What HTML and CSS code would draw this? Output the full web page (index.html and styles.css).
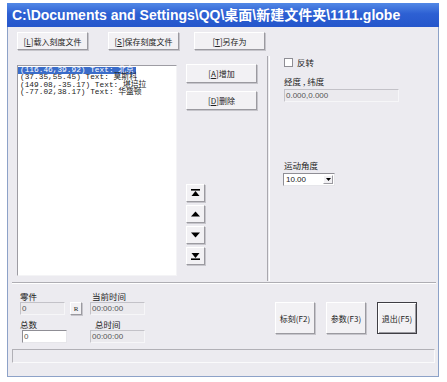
FILE: index.html
```html
<!DOCTYPE html>
<html lang="zh-CN">
<head>
  <meta charset="UTF-8" />
  <title>1111.globe</title>
  <link rel="stylesheet" href="styles.css">
</head>
<body>
  <div class="window">
    <div class="titlebar">C:\Documents and Settings\QQ\桌面\新建文件夹\1111.globe</div>
    <div class="client">

      <!-- File toolbar -->
      <div class="toolbar">
        <button class="btn tb-load">[<u>L</u>]载入刻度文件</button>
        <button class="btn tb-save">[<u>S</u>]保存刻度文件</button>
        <button class="btn tb-saveas">[<u>T</u>]另存为</button>
      </div>

      <div class="main">
        <!-- Point list -->
        <div class="list">
          <div class="item selected">(116.46,39.92) Text: 北京</div>
          <div class="item">(37.35,55.45) Text: 莫斯科</div>
          <div class="item">(149.08,-35.17) Text: 堪培拉</div>
          <div class="item">(-77.02,38.17) Text: 华盛顿</div>
        </div>

        <div class="mid">
          <button class="btn side-btn">[<u>A</u>]增加</button>
          <button class="btn side-btn del">[<u>D</u>]删除</button>
          <div class="arrows">
            <button class="btn arrow"><svg width="9" height="8" viewBox="0 0 9 8"><rect x="0" y="0" width="9" height="1.6" fill="#000"/><polygon points="4.5,2 8.5,7 0.5,7" fill="#000"/></svg></button>
            <button class="btn arrow"><svg width="9" height="6" viewBox="0 0 9 6"><polygon points="4.5,0.5 9,5.5 0,5.5" fill="#000"/></svg></button>
            <button class="btn arrow"><svg width="9" height="6" viewBox="0 0 9 6"><polygon points="0,0.5 9,0.5 4.5,5.5" fill="#000"/></svg></button>
            <button class="btn arrow"><svg width="9" height="8" viewBox="0 0 9 8"><polygon points="0.5,1 8.5,1 4.5,6" fill="#000"/><rect x="0" y="6.4" width="9" height="1.6" fill="#000"/></svg></button>
          </div>
        </div>

        <div class="vsep"></div>

        <!-- Settings panel -->
        <div class="right">
          <label class="check"><span class="box"></span>反转</label>
          <div class="label coord-label">经度 , 纬度</div>
          <div class="field coord">0.000,0.000</div>
          <div class="label angle-label">运动角度</div>
          <div class="combo">
            <span class="combo-value">10.00</span>
            <span class="combo-btn"><svg width="5" height="3" viewBox="0 0 5 3"><polygon points="0,0 5,0 2.5,3" fill="#000"/></svg></span>
          </div>
        </div>
      </div>

      <div class="hsep"></div>

      <!-- Counters and actions -->
      <div class="bottom">
        <div class="col counts">
          <div class="label">零件</div>
          <div class="field count">0</div>
          <div class="label">总数</div>
          <div class="field count white">0</div>
        </div>
        <button class="btn reset">R</button>
        <div class="col times">
          <div class="label">当前时间</div>
          <div class="field time">00:00:00</div>
          <div class="label indent">总时间</div>
          <div class="field time">00:00:00</div>
        </div>
        <div class="actions">
          <button class="btn act">标刻(F2)</button>
          <button class="btn act">参数(F3)</button>
          <button class="btn act default">退出(F5)</button>
        </div>
      </div>

      <div class="status"></div>
    </div>
  </div>
</body>
</html>
```

FILE: styles.css
```css
body {
  margin: 0;
  background: #fff;
  font-family: "Noto Sans CJK SC", "DejaVu Sans", sans-serif;
  font-size: 8px;
  color: #222;
}
.window {
  margin: 3px 0 0 7px;
  width: 430px;
  border: 1px solid #8da2c8;
  border-top: none;
  background: #ecebf0;
}
.titlebar {
  height: 24px;
  margin: 0 -1px;
  padding-left: 5px;
  background: linear-gradient(#5288e6, #2d60d3 45%, #2556cb);
  color: #fff;
  font-family: "Liberation Sans", "Noto Sans CJK SC", sans-serif;
  font-weight: bold;
  font-size: 14px;
  line-height: 25px;
  white-space: nowrap;
  overflow: hidden;
}
.client {
  height: 349px;
  display: flex;
  flex-direction: column;
}
/* 3D push button */
.btn {
  padding: 0;
  margin: 0;
  font: inherit;
  font-size: 8px;
  color: #222;
  background: #f2f1f4;
  border: 1px solid;
  border-color: #fff #9b9aa0 #9b9aa0 #fff;
  box-shadow: 1px 1px 0 #c6c5cb;
  display: flex;
  align-items: center;
  justify-content: center;
}
.toolbar {
  display: flex;
  padding: 5px 0 0 9px;
  height: 18px;
}
.toolbar .btn {
  width: 71px;
  height: 18px;
}
.tb-save { margin-left: 20px; }
.tb-saveas { margin-left: 15px; }

.main {
  display: flex;
  margin-top: 6px;
  height: 225px;
}
.list {
  margin: 9px 0 0 9px;
  width: 158px;
  height: 208px;
  background: #fff;
  border: 1px solid;
  border-color: #9d9ca3 #f4f4f6 #f4f4f6 #9d9ca3;
  font-family: "Liberation Mono", "Noto Sans CJK SC", monospace;
  font-size: 7.8px;
  padding-top: 1px;
}
.item {
  height: 7.3px;
  line-height: 7.3px;
  padding-left: 2px;
  white-space: nowrap;
}
.item.selected {
  background: #3a6cc9;
  color: #fff;
  width: fit-content;
  padding-right: 2px;
}
.mid {
  margin: 8px 0 0 9px;
  width: 71px;
  display: flex;
  flex-direction: column;
}
.side-btn {
  width: 71px;
  height: 19px;
}
.del { margin-top: 8px; }
.arrows {
  margin-top: 74px;
  display: flex;
  flex-direction: column;
  gap: 3px;
}
.arrow {
  width: 19px;
  height: 18px;
}
.vsep {
  margin-left: 10px;
  width: 1px;
  border-left: 1px solid #a9a8ae;
  border-right: 1px solid #fff;
}
.right {
  margin-left: 14px;
  display: flex;
  flex-direction: column;
  font-size: 8.5px;
}
.check {
  display: flex;
  align-items: center;
  gap: 4px;
  margin-top: 1px;
  height: 10px;
}
.box {
  width: 7px;
  height: 7px;
  background: #fff;
  border: 1px solid #8f8e95;
}
.label {
  height: 11px;
  line-height: 11px;
  white-space: nowrap;
}
.coord-label { margin-top: 9px; }
.field {
  background: #ebeaee;
  border: 1px solid;
  border-color: #c3c2c8 #f6f6f8 #f6f6f8 #c3c2c8;
  color: #555;
  height: 11px;
  line-height: 11px;
  padding-left: 1px;
  font-family: "Liberation Sans", "DejaVu Sans", sans-serif;
  font-size: 8px;
}
.coord {
  margin-top: 2px;
  width: 112px;
}
.angle-label { margin-top: 58px; }
.combo {
  margin: 2px 0 0 -1px;
  width: 50px;
  height: 11px;
  background: #fff;
  border: 1px solid;
  border-color: #8f8e95 #e6e6ea #e6e6ea #8f8e95;
  display: flex;
  align-items: center;
  font-family: "Liberation Sans", sans-serif;
  font-size: 8px;
}
.combo-value {
  flex: 1;
  padding-left: 2px;
}
.combo-btn {
  width: 10px;
  height: 9px;
  margin-right: 1px;
  background: #f2f1f4;
  border: 1px solid;
  border-color: #fff #9b9aa0 #9b9aa0 #fff;
  box-sizing: border-box;
  display: flex;
  align-items: center;
  justify-content: center;
}
.hsep {
  margin: 1px 0 0 4px;
  width: 424px;
  border-top: 1px solid #aeadb3;
  border-bottom: 1px solid #fff;
}
.bottom {
  display: flex;
  height: 63px;
  padding-left: 12px;
  font-size: 8.5px;
}
.col {
  display: flex;
  flex-direction: column;
  padding-top: 6px;
}
.col .label { height: 12px; line-height: 12px; }
.counts { width: 46px; }
.count { width: 42px; }
.count.white {
  background: #fff;
  margin-left: 2px;
  border-color: #8f8e95 #e6e6ea #e6e6ea #8f8e95;
}
.col .field + .label { margin-top: 3px; }
.reset {
  width: 12px;
  height: 13px;
  margin: 18px 0 0 4px;
  font-family: "Liberation Serif", serif;
  font-size: 7px;
}
.times {
  margin-left: 8px;
  width: 54px;
}
.times .label { padding-left: 2px; }
.times .indent { padding-left: 5px; }
.time { width: 52px; }
.actions {
  display: flex;
  gap: 11px;
  margin: 18px 0 0 auto;
  padding-right: 21px;
}
.act {
  width: 40px;
  height: 32px;
}
.act.default {
  border: 1px solid #3f3e44;
  box-shadow: inset 1px 1px 0 #fff, inset -1px -1px 0 #9b9aa0;
}
.status {
  margin: 2px 0 0 4px;
  width: 421px;
  height: 12px;
  border: 1px solid;
  border-color: #b1b0b6 #fafafb #fafafb #b1b0b6;
}
```
